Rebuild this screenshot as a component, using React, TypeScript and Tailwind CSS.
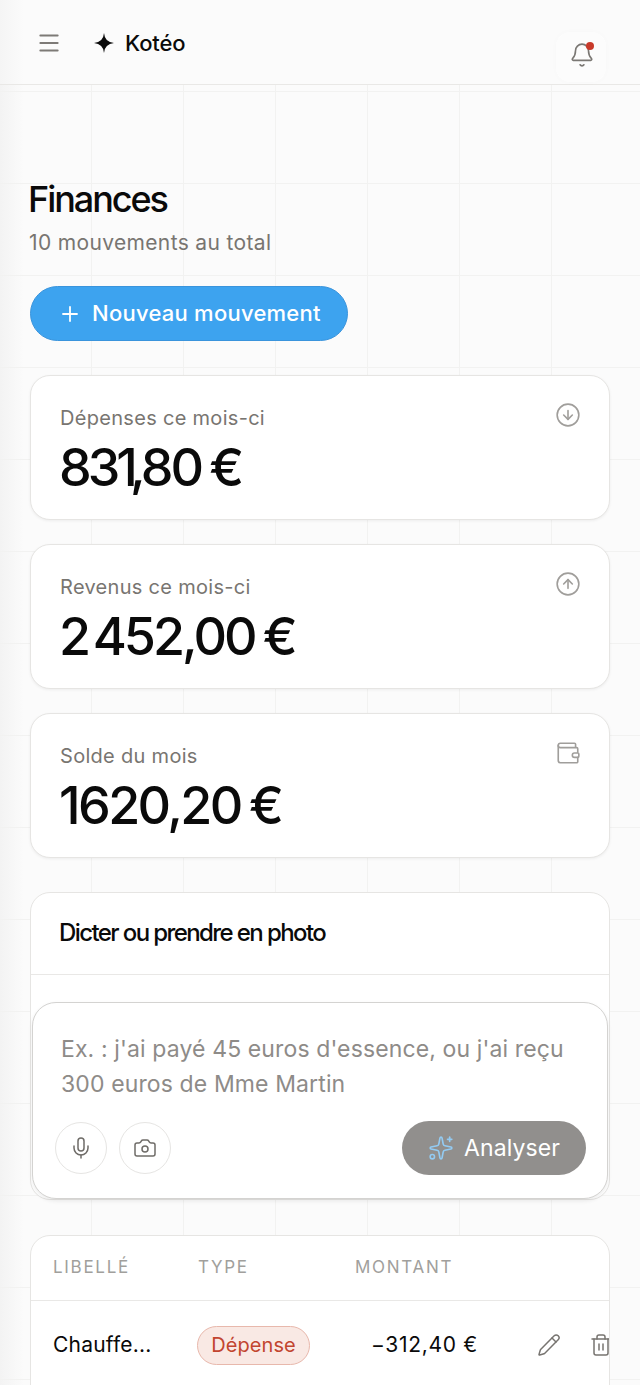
import { Bell, Camera, CircleArrowDown, CircleArrowUp, Menu, Mic, Pencil, Plus, Sparkles, Trash2, Wallet } from 'lucide-react';
import type { ReactNode } from 'react';

const fontStack = { fontFamily: 'Inter, "Noto Sans", sans-serif' };

interface StatCardProps {
    label: string;
    value: ReactNode;
    icon: ReactNode;
}

function StatCard({ label, value, icon }: StatCardProps) {
    return (
        <div className="h-[145px] rounded-[20px] border border-[#e6e5e3] bg-white px-[29px] pt-[29px] shadow-[0_1px_3px_rgba(0,0,0,0.06)]">
            <div className="flex items-start justify-between">
                <span className="text-[20px] leading-[26px] tracking-[0.3px] text-[#787571]">{label}</span>
                <span className="-mt-[3px] translate-x-[1px] text-[#a09e9b]">{icon}</span>
            </div>
            <div className="mt-[8px] -ml-[1px] text-[52px] leading-[58px] font-medium tracking-[-2.6px] whitespace-nowrap text-[#0a0a0a] [word-spacing:-3px]">{value}</div>
        </div>
    );
}

export default function App() {
    return (
        <div
            style={fontStack}
            className="h-[1385px] w-[640px] overflow-hidden bg-[#fbfbfb] [background-image:linear-gradient(to_right,#f2f2f1_1px,transparent_1px),linear-gradient(to_bottom,#f2f2f1_1px,transparent_1px),linear-gradient(to_right,#f3f3f3,#fbfbfb)] [background-position:-1px_-1px,-1px_-1px,0_0] [background-repeat:repeat,repeat,no-repeat] [background-size:92px_92px,92px_92px,24px_100%]"
        >
            <header className="flex h-[85px] items-start justify-between border-b border-[#e9e8e6] bg-[linear-gradient(to_right,#f5f5f5,#fbfbfb_24px)] pr-[34px] pl-[36px]">
                <div className="flex items-center pt-[29px]">
                    <Menu size={26} strokeWidth={1.8} className="text-[#7d7a76]" />
                    <svg viewBox="0 0 24 24" className="mr-[1px] ml-[32px] h-[20px] w-[20px] text-[#0a0a0a]" fill="currentColor">
                        <path d="M12 0Q12.900 11.100 24 12Q12.900 12.900 12 24Q11.100 12.900 0 12Q11.100 11.100 12 0z" />
                    </svg>
                    <span className="ml-[10px] text-[22px] leading-[28px] font-[450] tracking-[-0.1px] text-[#0a0a0a]">Kotéo</span>
                </div>
                <div className="relative mt-[32px] flex h-[50px] w-[50px] items-start justify-center rounded-[14px] bg-white/40 pt-[10px] shadow-[0_0_6px_rgba(0,0,0,0.02)]">
                    <Bell size={26} strokeWidth={1.5} className="translate-x-[1px] text-[#7a7773]" />
                    <span className="absolute top-[10px] right-[12px] h-[8px] w-[8px] rounded-full bg-[#c83a2a]" />
                </div>
            </header>

            <main className="px-[30px]">
                <h1 className="mt-[91px] -ml-[2px] text-[36px] leading-[46px] font-medium tracking-[-2.05px] text-[#0a0a0a]">Finances</h1>
                <p className="mt-[7px] -ml-[1px] text-[21px] leading-[28px] tracking-[0.35px] text-[#787571]">10 mouvements au total</p>

                <button className="mt-[29px] flex h-[55px] w-[318px] items-center gap-[10px] rounded-full border border-[#3a94dc] bg-[#3da3ef] pl-[27px] text-[22px] font-[480] tracking-[0.25px] text-white">
                    <Plus size={24} strokeWidth={1.8} />
                    Nouveau mouvement
                </button>

                <div className="mt-[34px] flex flex-col gap-[24px]">
                    <StatCard
                        label="Dépenses ce mois-ci"
                        value={
                            <>
                                <span className="tracking-[-4px]">83</span>
                                <span className="tracking-[-8px]">1</span>
                                <span className="tracking-[-5px]">,</span>
                                <span className="tracking-[-3px]">80</span> €
                            </>
                        }
                        icon={<CircleArrowDown size={26} strokeWidth={1.5} />}
                    />
                    <StatCard
                        label="Revenus ce mois-ci"
                        value={
                            <>
                                2<span className="[word-spacing:-7px]"> </span>
                                <span className="tracking-[-3px]">452,00</span> €
                            </>
                        }
                        icon={<CircleArrowUp size={26} strokeWidth={1.5} />}
                    />
                    <StatCard label="Solde du mois" value="1620,20 €" icon={<Wallet size={26} strokeWidth={1.5} />} />
                </div>

                <section className="mt-[34px] h-[308px] rounded-[20px] border border-[#e6e5e3] bg-white">
                    <div className="flex h-[82px] items-center border-b border-[#e9e8e6] pb-[2px] pl-[28px]">
                        <h2 className="text-[24px] font-medium tracking-[-1.6px] text-[#0a0a0a]">Dicter ou prendre en photo</h2>
                    </div>
                    <div className="mx-[1px] mt-[27px] h-[197px] rounded-[24px] border border-[#d4d3d1] bg-white pt-[29px] pr-[21px] pl-[22px] shadow-[0_2px_4px_rgba(0,0,0,0.08)]">
                        <p className="pl-[6px] text-[23px] leading-[35px] tracking-[0.12px] text-[#8e8b88]">
                            Ex. : j'ai payé 45 euros d'essence, ou j'ai reçu 300 euros de Mme Martin
                        </p>
                        <div className="mt-[19px] flex items-center justify-between">
                            <div className="flex gap-[12px]">
                                <span className="flex h-[52px] w-[52px] items-center justify-center rounded-full border border-[#e6e5e3] text-[#6f6c68]">
                                    <Mic size={24} strokeWidth={1.5} />
                                </span>
                                <span className="flex h-[52px] w-[52px] items-center justify-center rounded-full border border-[#e6e5e3] text-[#6f6c68]">
                                    <Camera size={24} strokeWidth={1.5} />
                                </span>
                            </div>
                            <button className="flex h-[54px] w-[184px] items-center gap-[10px] rounded-full bg-[#918f8d] pl-[26px] text-[23px] tracking-[0.1px] text-white">
                                <Sparkles size={26} strokeWidth={1.5} className="text-[#93cbf3]" />
                                Analyser
                            </button>
                        </div>
                    </div>
                </section>

                <section className="mt-[35px] h-[300px] overflow-hidden rounded-[20px] border border-[#e6e5e3] bg-white">
                    <div className="flex h-[65px] items-center border-b border-[#e9e8e6] pl-[22px] text-[17px] tracking-[1.7px] text-[#a19f9c]">
                        <span className="w-[145px]">LIBELLÉ</span>
                        <span className="w-[157px]">TYPE</span>
                        <span>MONTANT</span>
                    </div>
                    <div className="flex h-[88px] items-center pl-[22px]">
                        <span className="w-[144px] shrink-0 text-[21px] tracking-[0.2px] text-[#0a0a0a]">Chauffe...</span>
                        <span className="flex h-[39px] w-[113px] shrink-0 items-center justify-center rounded-full border border-[#e8b8ac] bg-[#f9e9e4] text-[20px] tracking-[0.1px] text-[#c2452f]">
                            Dépense
                        </span>
                        <span className="ml-[61px] w-[106px] shrink-0 text-[21px] tracking-[0.7px] whitespace-nowrap text-[#0a0a0a]">−312,40 €</span>
                        <Pencil size={24} strokeWidth={1.5} className="ml-[60px] shrink-0 text-[#777470]" />
                        <Trash2 size={24} strokeWidth={1.5} className="ml-[28px] shrink-0 text-[#777470]" />
                    </div>
                </section>
            </main>
        </div>
    );
}
